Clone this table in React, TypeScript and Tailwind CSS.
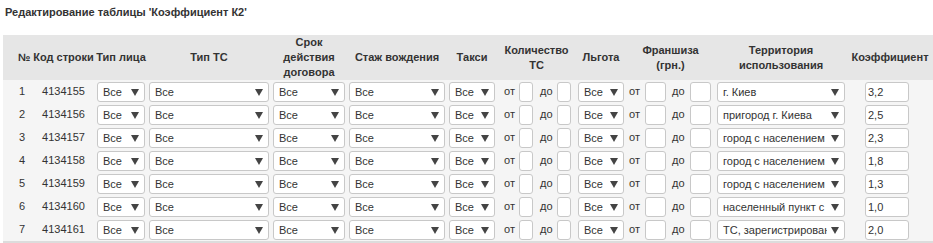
import React from "react";

const Arrow = () => (
  <svg width="8" height="7" viewBox="0 0 8 7" className="absolute right-[5px] top-[6px]">
    <path d="M0 0 H8 L4 7 Z" fill="#444" />
  </svg>
);

const Sel = ({ w, text }: { w: string; text: string }) => (
  <div
    className={`relative h-[20px] ${w} border border-[#c8c8c8] rounded-[3px] bg-white pl-[5px] pr-[17px] overflow-hidden whitespace-nowrap text-[11px] leading-[18px] text-[#333]`}
  >
    <span className="block overflow-hidden">{text}</span>
    <Arrow />
  </div>
);

const Inp = ({ w, val = "" }: { w: string; val?: string }) => (
  <div
    className={`h-[20px] ${w} border border-[#c8c8c8] rounded-[3px] bg-white pl-[2px] text-[11px] leading-[18px] text-[#333]`}
  >
    {val}
  </div>
);

const rows = [
  { n: 1, code: "4134155", terr: "г. Киев", k: "3,2" },
  { n: 2, code: "4134156", terr: "пригород г. Киева", k: "2,5" },
  { n: 3, code: "4134157", terr: "город с населением", k: "2,3" },
  { n: 4, code: "4134158", terr: "город с населением", k: "1,8" },
  { n: 5, code: "4134159", terr: "город с населением", k: "1,3" },
  { n: 6, code: "4134160", terr: "населенный пункт с", k: "1,0" },
  { n: 7, code: "4134161", terr: "ТС, зарегистрированные", k: "2,0" },
];

export default function App() {
  return (
    <div
      className="w-[933px] h-[243px] bg-white overflow-hidden text-[#333]"
      style={{ fontFamily: '"Liberation Sans", Arial, sans-serif' }}
    >
      <div className="pl-[5px] pt-[5px] h-[35px] text-[11px] font-bold leading-[15px] text-[#333]">
        Редактирование таблицы 'Коэффициент К2'
      </div>
      <div className="ml-[3px] w-[930px] border-b-[3px] border-[#dcdcdc]">
        <table className="table-fixed border-collapse w-[930px] text-[11px]">
          <colgroup>
            <col className="w-[29px]" />
            <col className="w-[63px]" />
            <col className="w-[52px]" />
            <col className="w-[124px]" />
            <col className="w-[76px]" />
            <col className="w-[100px]" />
            <col className="w-[50px]" />
            <col className="w-[79px]" />
            <col className="w-[50px]" />
            <col className="w-[89px]" />
            <col className="w-[132px]" />
            <col className="w-[86px]" />
          </colgroup>
          <thead>
            <tr className="bg-[#e6e6e6] h-[45px] font-bold text-[#333] leading-[15px]">
              <th className="pl-[15px] text-left font-bold">№</th>
              <th className="text-center font-bold whitespace-nowrap">Код строки</th>
              <th className="text-center font-bold whitespace-nowrap">Тип лица</th>
              <th className="text-center font-bold">Тип ТС</th>
              <th className="text-center font-bold px-[4px]">Срок действия договора</th>
              <th className="text-center font-bold">Стаж вождения</th>
              <th className="text-center font-bold">Такси</th>
              <th className="text-center font-bold px-[4px]">Количество ТС</th>
              <th className="text-center font-bold">Льгота</th>
              <th className="text-center font-bold px-[10px]">Франшиза (грн.)</th>
              <th className="text-center font-bold px-[4px]">Территория использования</th>
              <th className="text-center font-bold whitespace-nowrap">Коэффициент</th>
            </tr>
          </thead>
          <tbody className="bg-[#f5f5f5]">
            {rows.map((r) => (
              <tr key={r.n} className="h-[23px]">
                <td className="pl-[16px] text-left">{r.n}</td>
                <td className="text-center">{r.code}</td>
                <td className="px-[2px]">
                  <Sel w="w-[48px]" text="Все" />
                </td>
                <td className="px-[2px]">
                  <Sel w="w-[120px]" text="Все" />
                </td>
                <td className="px-[2px]">
                  <Sel w="w-[72px]" text="Все" />
                </td>
                <td className="px-[2px]">
                  <Sel w="w-[96px]" text="Все" />
                </td>
                <td className="px-[2px]">
                  <Sel w="w-[46px]" text="Все" />
                </td>
                <td>
                  <div className="flex items-center pl-[7px]">
                    <span className="w-[12px]">от</span>
                    <span className="ml-[3px]"><Inp w="w-[14px]" /></span>
                    <span className="ml-[7px] w-[14px]">до</span>
                    <span className="ml-[3px]"><Inp w="w-[14px]" /></span>
                  </div>
                </td>
                <td className="px-[2px]">
                  <Sel w="w-[46px]" text="Все" />
                </td>
                <td>
                  <div className="flex items-center pl-[3px]">
                    <span className="w-[12px]">от</span>
                    <span className="ml-[4px]"><Inp w="w-[21px]" /></span>
                    <span className="ml-[6px] w-[14px]">до</span>
                    <span className="ml-[4px]"><Inp w="w-[21px]" /></span>
                  </div>
                </td>
                <td className="px-[2px]">
                  <Sel w="w-[128px]" text={r.terr} />
                </td>
                <td>
                  <div className="ml-[18px]">
                    <Inp w="w-[44px]" val={r.k} />
                  </div>
                </td>
              </tr>
            ))}
          </tbody>
        </table>
      </div>
    </div>
  );
}
